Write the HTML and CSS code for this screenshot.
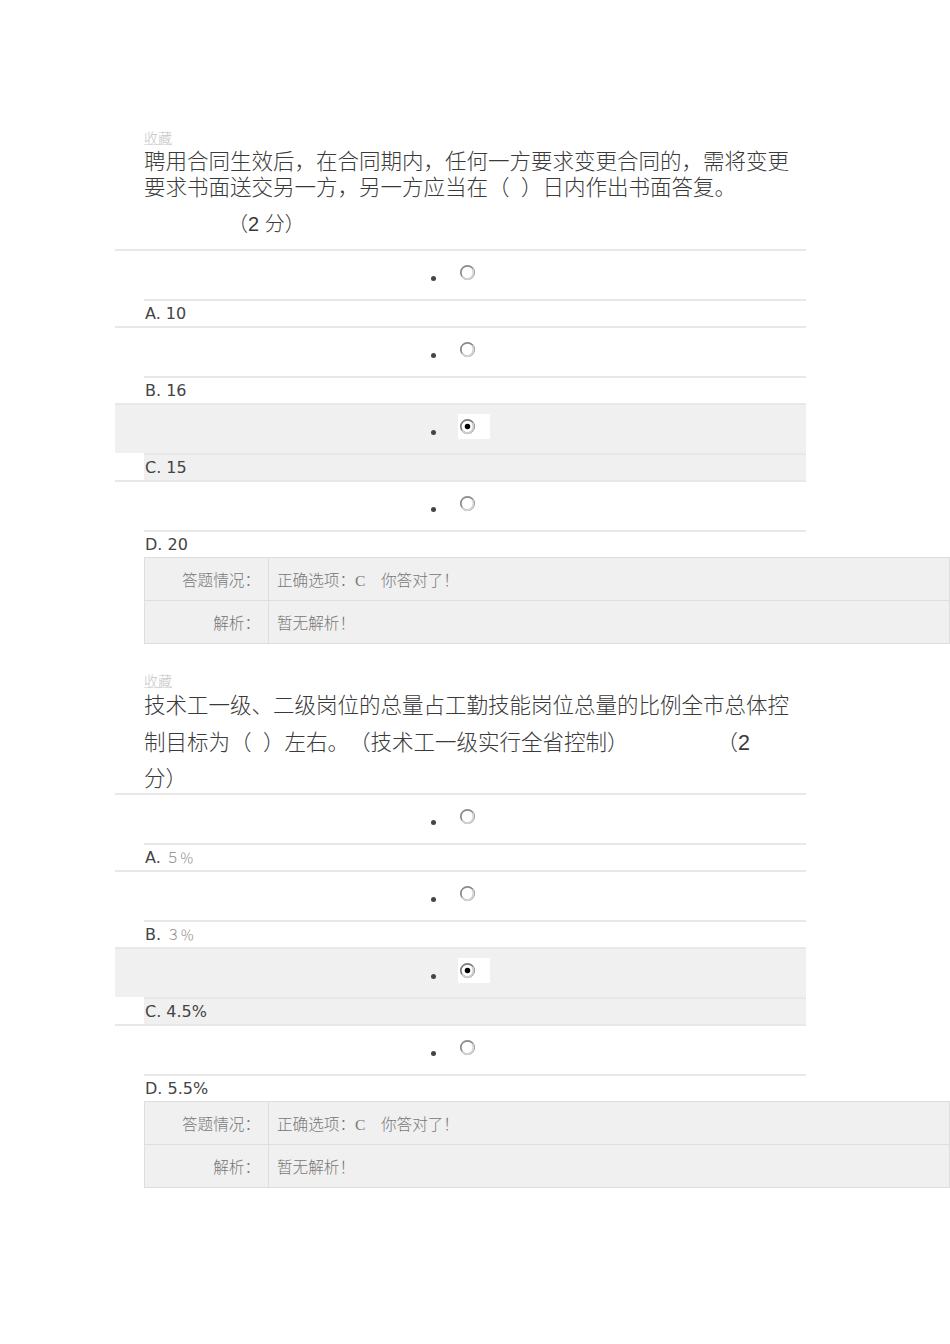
FILE: index.html
```html
<!DOCTYPE html>
<html lang="zh-CN">
<head>
<meta charset="utf-8">
<title>答题</title>
<link rel="stylesheet" href="styles.css">
</head>
<body>
<div class="page">

  <section class="question first">
    <a class="fav">收藏</a>
    <div class="q-text q1">聘用合同生效后，在合同期内，任何一方要求变更合同的，需将变更<br>要求书面送交另一方，另一方应当在（ ）日内作出书面答复。</div>
    <div class="score">（2 分）</div>

    <div class="option">
      <div class="choice"><span class="bullet"></span><span class="radio-box"><svg class="radio" width="17" height="17" viewBox="0 0 16 16"><circle cx="8" cy="8" r="6.3" fill="#fff" stroke="#8a8a8a" stroke-width="1.6"/><path d="M12.5 4.5 A6.3 6.3 0 0 1 8 14.3 A6.3 6.3 0 0 1 3 11.8" fill="none" stroke="#d4d4d4" stroke-width="1.8"/></svg></span></div>
      <div class="label">A. 10</div>
    </div>
    <div class="option">
      <div class="choice"><span class="bullet"></span><span class="radio-box"><svg class="radio" width="17" height="17" viewBox="0 0 16 16"><circle cx="8" cy="8" r="6.3" fill="#fff" stroke="#8a8a8a" stroke-width="1.6"/><path d="M12.5 4.5 A6.3 6.3 0 0 1 8 14.3 A6.3 6.3 0 0 1 3 11.8" fill="none" stroke="#d4d4d4" stroke-width="1.8"/></svg></span></div>
      <div class="label">B. 16</div>
    </div>
    <div class="option selected">
      <div class="choice"><span class="bullet"></span><span class="radio-box"><svg class="radio" width="17" height="17" viewBox="0 0 16 16"><circle cx="8" cy="8" r="6.3" fill="#fff" stroke="#7a7a7a" stroke-width="1.6"/><path d="M12.5 4.5 A6.3 6.3 0 0 1 8 14.3 A6.3 6.3 0 0 1 3 11.8" fill="none" stroke="#cfcfcf" stroke-width="1.8"/><circle cx="8" cy="8" r="2.6" fill="#000"/></svg></span></div>
      <div class="label">C. 15</div>
    </div>
    <div class="option">
      <div class="choice"><span class="bullet"></span><span class="radio-box"><svg class="radio" width="17" height="17" viewBox="0 0 16 16"><circle cx="8" cy="8" r="6.3" fill="#fff" stroke="#8a8a8a" stroke-width="1.6"/><path d="M12.5 4.5 A6.3 6.3 0 0 1 8 14.3 A6.3 6.3 0 0 1 3 11.8" fill="none" stroke="#d4d4d4" stroke-width="1.8"/></svg></span></div>
      <div class="label">D. 20</div>
    </div>

    <table class="result">
      <tr><td class="k">答题情况：</td><td class="v">正确选项：C　你答对了！</td></tr>
      <tr><td class="k">解析：</td><td class="v">暂无解析！</td></tr>
    </table>
  </section>

  <section class="question second">
    <a class="fav">收藏</a>
    <div class="q-text q2">
      <div class="line">技术工一级、二级岗位的总量占工勤技能岗位总量的比例全市总体控</div>
      <div class="line split"><span>制目标为（ ）左右。（技术工一级实行全省控制）</span><span>（2</span></div>
      <div class="line">分）</div>
    </div>

    <div class="option">
      <div class="choice"><span class="bullet"></span><span class="radio-box"><svg class="radio" width="17" height="17" viewBox="0 0 16 16"><circle cx="8" cy="8" r="6.3" fill="#fff" stroke="#8a8a8a" stroke-width="1.6"/><path d="M12.5 4.5 A6.3 6.3 0 0 1 8 14.3 A6.3 6.3 0 0 1 3 11.8" fill="none" stroke="#d4d4d4" stroke-width="1.8"/></svg></span></div>
      <div class="label">A. <span class="fw">５％</span></div>
    </div>
    <div class="option">
      <div class="choice"><span class="bullet"></span><span class="radio-box"><svg class="radio" width="17" height="17" viewBox="0 0 16 16"><circle cx="8" cy="8" r="6.3" fill="#fff" stroke="#8a8a8a" stroke-width="1.6"/><path d="M12.5 4.5 A6.3 6.3 0 0 1 8 14.3 A6.3 6.3 0 0 1 3 11.8" fill="none" stroke="#d4d4d4" stroke-width="1.8"/></svg></span></div>
      <div class="label">B. <span class="fw">３％</span></div>
    </div>
    <div class="option selected">
      <div class="choice"><span class="bullet"></span><span class="radio-box"><svg class="radio" width="17" height="17" viewBox="0 0 16 16"><circle cx="8" cy="8" r="6.3" fill="#fff" stroke="#7a7a7a" stroke-width="1.6"/><path d="M12.5 4.5 A6.3 6.3 0 0 1 8 14.3 A6.3 6.3 0 0 1 3 11.8" fill="none" stroke="#cfcfcf" stroke-width="1.8"/><circle cx="8" cy="8" r="2.6" fill="#000"/></svg></span></div>
      <div class="label">C. 4.5%</div>
    </div>
    <div class="option">
      <div class="choice"><span class="bullet"></span><span class="radio-box"><svg class="radio" width="17" height="17" viewBox="0 0 16 16"><circle cx="8" cy="8" r="6.3" fill="#fff" stroke="#8a8a8a" stroke-width="1.6"/><path d="M12.5 4.5 A6.3 6.3 0 0 1 8 14.3 A6.3 6.3 0 0 1 3 11.8" fill="none" stroke="#d4d4d4" stroke-width="1.8"/></svg></span></div>
      <div class="label">D. 5.5%</div>
    </div>

    <table class="result">
      <tr><td class="k">答题情况：</td><td class="v">正确选项：C　你答对了！</td></tr>
      <tr><td class="k">解析：</td><td class="v">暂无解析！</td></tr>
    </table>
  </section>

</div>
</body>
</html>
```

FILE: styles.css
```css
html, body {
  margin: 0;
  padding: 0;
  background: #fff;
}

body {
  font-family: "Noto Sans CJK SC", sans-serif;
  color: #333;
  text-spacing-trim: space-all;
}

.page {
  margin-left: 115px;
  width: 691px;
}

.question.first {
  padding-top: 129px;
}

.question.second {
  margin-top: 28px;
}

.fav {
  display: block;
  margin-left: 29px;
  font-size: 14px;
  line-height: 16px;
  height: 16px;
  color: #c4c4c4;
  text-decoration: underline;
  text-decoration-color: #e2e2e2;
  font-weight: 300;
}

.q-text {
  margin-left: 29px;
  font-family: "Liberation Serif", "Noto Sans CJK SC", serif;
  font-size: 21.5px;
  color: #3a3a3a;
  white-space: nowrap;
  font-weight: 300;
  word-spacing: 6px;
}

.q1 {
  margin-top: 4px;
  line-height: 26px;
}

.score {
  margin: 10px 0 12px 29px;
  padding-left: 84px;
  font-family: "Liberation Sans", "Noto Sans CJK SC", sans-serif;
  font-size: 20px;
  line-height: 26px;
  color: #3a3a3a;
  font-weight: 300;
}

.q2 {
  height: 105px;
  line-height: 36.5px;
}

.q2 .line.split {
  display: flex;
  justify-content: space-between;
  width: 606px;
}

.q2 .line.split span:last-child {
  font-family: "Liberation Sans", "Noto Sans CJK SC", sans-serif;
}

.option {
  border-top: 2px solid #e8e8e8;
}

.choice {
  height: 48px;
  display: flex;
  justify-content: center;
}

.bullet {
  width: 5px;
  height: 5px;
  border-radius: 50%;
  background: #444;
  margin-top: 25px;
  margin-right: 22px;
}

.radio-box {
  width: 32px;
  height: 25px;
  margin-top: 9px;
  display: flex;
  align-items: center;
}

.radio {
  display: block;
  margin-left: 1px;
}

.label {
  margin-left: 29px;
  border-top: 2px solid #e8e8e8;
  height: 25px;
  line-height: 25px;
  padding-left: 1px;
  font-family: "DejaVu Sans", sans-serif;
  font-size: 16px;
  color: #444;
}

.label .fw {
  font-family: "Noto Sans CJK SC", sans-serif;
  font-size: 14px;
  font-weight: 300;
  color: #888;
}

.option.selected .choice,
.option.selected .label {
  background: #f0f0f0;
}

.option.selected .radio-box {
  background: #fff;
}

.result {
  margin-left: 29px;
  width: 806px;
  border-collapse: collapse;
  background: #f0f0f0;
  font-family: "Liberation Serif", "Noto Sans CJK SC", serif;
  font-size: 15.6px;
  font-weight: 300;
  color: #777;
}

.result td {
  border: 1px solid #dedede;
  height: 43px;
  padding: 0;
  box-sizing: border-box;
}

.result td.k {
  width: 124px;
  text-align: right;
  padding-right: 8px;
}

.result td.v {
  padding-left: 8px;
}
```
